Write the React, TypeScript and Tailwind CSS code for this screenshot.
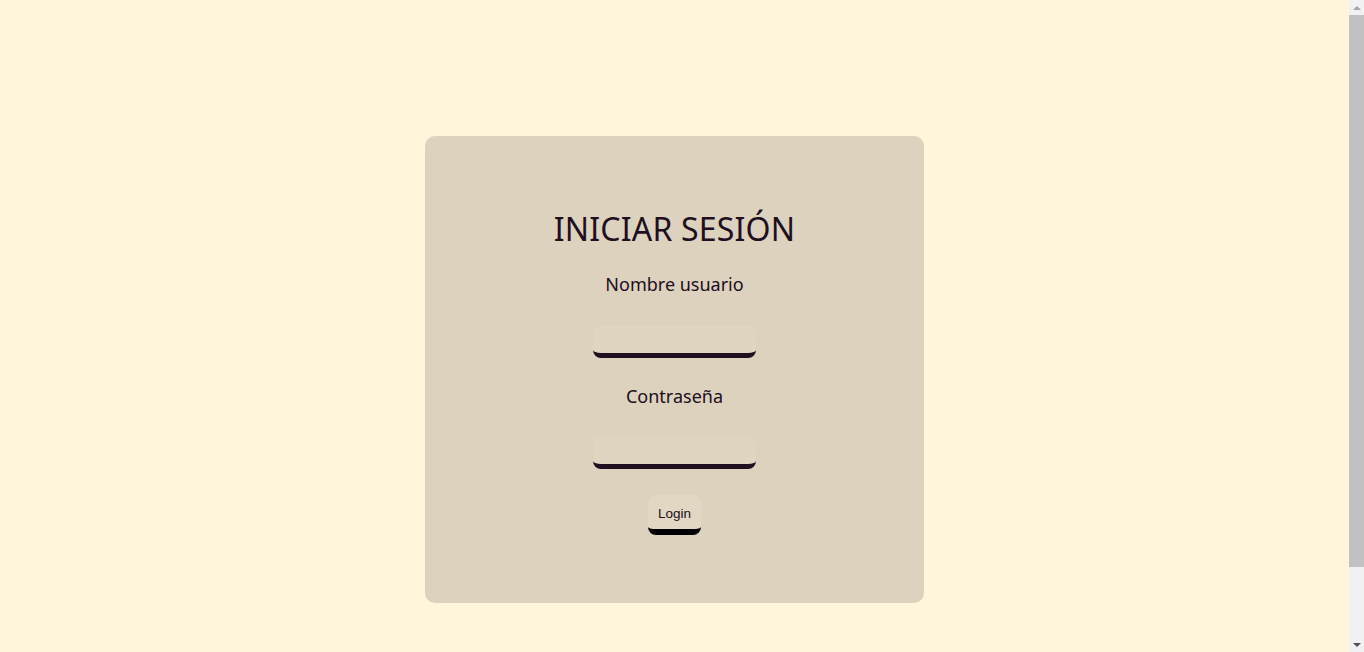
import React from "react";

export default function App() {
  return (
    <div
      className="min-h-[735px] w-full bg-[#fef5db] pt-[136px] pb-[132px] pr-[15px]"
      style={{ fontFamily: '"Noto Sans", sans-serif' }}
    >
      <div className="mx-auto flex h-[467px] w-[499px] flex-col items-center rounded-[10px] bg-[#ddd2bd] pt-[73px] text-[#200e21]">
        <h1 className="h-[40px] text-[32px] leading-[40px] font-normal tracking-[0.2px]">INICIAR SESIÓN</h1>
        <label className="mt-[21px] h-[28px] text-[18px] leading-[28px]">Nombre usuario</label>
        <input
          type="text"
          className="mt-[28px] h-[32px] w-[163px] rounded-[8px] border-b-[5px] border-[#200e21] bg-[#e0d5c0] outline-none"
        />
        <label className="mt-[24px] h-[28px] text-[18px] leading-[28px]">Contraseña</label>
        <input
          type="password"
          className="mt-[27px] h-[32px] w-[163px] rounded-[8px] border-b-[5px] border-[#200e21] bg-[#e0d5c0] outline-none"
        />
        <button
          className="mt-[26px] h-[40px] w-[53px] rounded-[8px] border-b-[6px] border-black bg-[#e2d7c3] pt-[4px] text-[13.5px] text-[#200e21]"
          style={{ fontFamily: '"Liberation Sans", Arial, sans-serif' }}
        >
          Login
        </button>
      </div>
      <div className="fixed top-0 right-0 flex h-[652px] w-[15px] flex-col items-center bg-[#f1f1f1]">
        <div className="flex h-[15px] w-full items-center justify-center">
          <div className="h-0 w-0 border-x-[4px] border-b-[4px] border-x-transparent border-b-[#a3a3a3]" />
        </div>
        <div className="h-[552px] w-full bg-[#c1c1c1]" />
        <div className="flex-1" />
        <div className="flex h-[15px] w-full items-center justify-center">
          <div className="h-0 w-0 border-x-[4px] border-t-[4px] border-x-transparent border-t-[#505050]" />
        </div>
      </div>
    </div>
  );
}
